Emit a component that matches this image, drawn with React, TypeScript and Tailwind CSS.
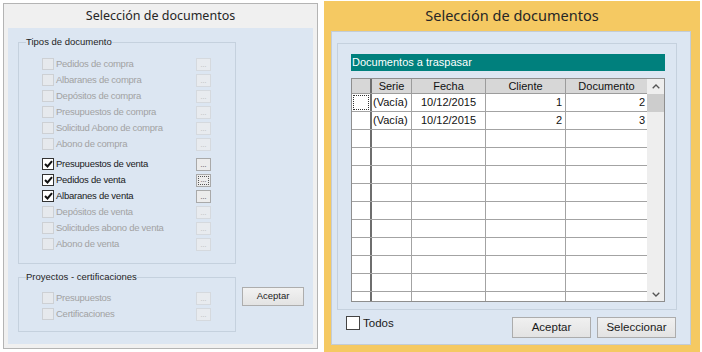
import React from 'react';

type Row = { label: string; enabled?: boolean; checked?: boolean; focus?: boolean; gap?: boolean };

const tipos: Row[] = [
  { label: 'Pedidos de compra' },
  { label: 'Albaranes de compra' },
  { label: 'Depósitos de compra' },
  { label: 'Presupuestos de compra' },
  { label: 'Solicitud Abono de compra' },
  { label: 'Abono de compra' },
  { label: 'Presupuestos de venta', enabled: true, checked: true, gap: true },
  { label: 'Pedidos de venta', enabled: true, checked: true, focus: true },
  { label: 'Albaranes de venta', enabled: true, checked: true },
  { label: 'Depósitos de venta' },
  { label: 'Solicitudes abono de venta' },
  { label: 'Abono de venta' },
];

const proyectos: Row[] = [{ label: 'Presupuestos' }, { label: 'Certificaciones' }];

const docs = [
  { serie: '(Vacía)', fecha: '10/12/2015', cliente: '1', documento: '2' },
  { serie: '(Vacía)', fecha: '10/12/2015', cliente: '2', documento: '3' },
];

function Check({ checked, enabled }: { checked?: boolean; enabled?: boolean }) {
  return (
    <span
      className={`w-[12px] h-[12px] border flex items-center justify-center shrink-0 ${
        enabled ? 'border-[#333333] bg-white' : 'border-[#cdd0d4] bg-[#e6e9ed]'
      }`}
    >
      {checked && (
        <svg width="9" height="8" viewBox="0 0 9 8">
          <path d="M1 4 L3.5 6.5 L8 1.2" fill="none" stroke="#111" strokeWidth="2" />
        </svg>
      )}
    </span>
  );
}

function DotsButton({ enabled, focus }: { enabled?: boolean; focus?: boolean }) {
  return (
    <span
      className={`ml-auto w-[15px] h-[13px] border flex items-end justify-center p-[1px] ${
        enabled ? 'border-[#a9a9a9] bg-[#ececec] text-[#333]' : 'border-[#d5d9de] bg-[#e8ebef] text-[#b4b4b4]'
      }`}
    >
      <span
        className={`w-full h-full flex items-end justify-center text-[7px] leading-[8px] ${
          focus ? 'border border-dotted border-[#555]' : ''
        }`}
      >
        ...
      </span>
    </span>
  );
}

function OptionRow({ row }: { row: Row }) {
  return (
    <div className={`w-[169px] h-[16px] flex items-center ${row.gap ? 'mt-[4px]' : ''}`}>
      <Check checked={row.checked} enabled={row.enabled} />
      <span className={`ml-[2px] text-[9.5px] tracking-[-0.25px] ${row.enabled ? 'text-[#1a1a1a]' : 'text-[#a2a2a2]'}`}>
        {row.label}
      </span>
      <DotsButton enabled={row.enabled} focus={row.focus} />
    </div>
  );
}

function LeftWindow() {
  return (
    <div className="ml-[3px] mt-[3px] w-[315px] h-[346px] bg-[#f0f0f0] border border-[#b4b4b4] flex flex-col">
      <div className="h-[24px] flex items-center justify-center text-[12.5px] text-[#262626] font-['Noto_Sans',sans-serif]">
        Selección de documentos
      </div>
      <div className="mx-[4px] mb-[4px] flex-1 bg-[#dce6f2] pl-[10px] pt-[8px]">
        <fieldset className="w-[218px] border border-[#c5d1de] pl-[23px] pt-[8px] pb-[11px]">
          <legend className="ml-[-16px] text-[9.5px] leading-[12px] text-[#1e1e1e]">Tipos de documento</legend>
          {tipos.map((r) => (
            <OptionRow key={r.label} row={r} />
          ))}
        </fieldset>
        <div className="flex items-start mt-[7px]">
          <fieldset className="w-[218px] border border-[#c5d1de] pl-[23px] pt-[7px] pb-[9px]">
            <legend className="ml-[-16px] text-[9.5px] leading-[12px] text-[#1e1e1e]">Proyectos - certificaciones</legend>
            {proyectos.map((r) => (
              <OptionRow key={r.label} row={r} />
            ))}
          </fieldset>
          <button className="ml-[6px] mt-[16px] w-[62px] h-[19px] border border-[#adadad] bg-gradient-to-b from-[#f2f2f2] to-[#e3e3e3] text-[9.5px] text-[#222]">
            Aceptar
          </button>
        </div>
      </div>
    </div>
  );
}

function Chevron({ down }: { down?: boolean }) {
  return (
    <svg width="8" height="5" viewBox="0 0 8 5" className={down ? 'rotate-180' : ''}>
      <path d="M0.7 4.3 L4 1 L7.3 4.3" fill="none" stroke="#555" strokeWidth="1.3" />
    </svg>
  );
}

function Grid() {
  const empty = Array.from({ length: 10 });
  return (
    <div className="mt-[7px] w-[314px] h-[224px] border border-[#8e8e8e] flex overflow-hidden bg-white text-[11px] text-[#111]">
      <div className="w-[295px] flex flex-col">
        <div className="h-[15px] shrink-0 flex bg-[#d7d7d7] border-b border-[#9c9c9c] leading-[14px]">
          <div className="w-[20px] border-r-2 border-[#6e6e6e]" />
          <div className="w-[40px] border-r border-[#9c9c9c] text-center">Serie</div>
          <div className="w-[74px] border-r border-[#9c9c9c] text-center">Fecha</div>
          <div className="w-[80px] border-r border-[#9c9c9c] text-center">Cliente</div>
          <div className="w-[81px] text-center">Documento</div>
        </div>
        {docs.map((d, i) => (
          <div key={i} className="h-[18px] shrink-0 flex border-b border-[#a3a3a3] leading-[17px]">
            <div className="w-[20px] border-r-2 border-[#6e6e6e] p-[1px]">
              {i === 0 && <div className="w-full h-full border border-dotted border-[#333]" />}
            </div>
            <div className="w-[40px] border-r border-[#a3a3a3] pl-[1px] whitespace-nowrap overflow-hidden">{d.serie}</div>
            <div className="w-[74px] border-r border-[#a3a3a3] text-center">{d.fecha}</div>
            <div className="w-[80px] border-r border-[#a3a3a3] text-right pr-[3px]">{d.cliente}</div>
            <div className="w-[81px] text-right pr-[2px]">{d.documento}</div>
          </div>
        ))}
        {empty.map((_, i) => (
          <div key={i} className="h-[18px] shrink-0 flex border-b border-[#a3a3a3]">
            <div className="w-[20px] border-r-2 border-[#6e6e6e]" />
            <div className="w-[40px] border-r border-[#a3a3a3]" />
            <div className="w-[74px] border-r border-[#a3a3a3]" />
            <div className="w-[80px] border-r border-[#a3a3a3]" />
            <div className="w-[81px]" />
          </div>
        ))}
      </div>
      <div className="w-[17px] flex flex-col bg-[#eeeeee]">
        <div className="h-[15px] flex items-center justify-center">
          <Chevron />
        </div>
        <div className="h-[18px] bg-[#cdcdcd]" />
        <div className="flex-1" />
        <div className="h-[14px] flex items-center justify-center">
          <Chevron down />
        </div>
      </div>
    </div>
  );
}

function RightWindow() {
  return (
    <div className="ml-[6px] mt-[1px] w-[376px] h-[351px] bg-[#f5c962] flex flex-col">
      <div className="h-[30px] flex items-center justify-center text-[14.5px] text-[#262626] font-['Noto_Sans',sans-serif]">
        Selección de documentos
      </div>
      <div className="ml-[7px] mr-[9px] mb-[7px] flex-1 bg-[#dce6f2] border border-[#c3ccd6] pl-[5px] pt-[11px] flex flex-col">
        <div className="w-[340px] h-[267px] border border-[#c5d1de] pl-[13px] pt-[10px]">
          <div className="w-[314px] h-[17px] bg-[#00807d] text-white text-[11px] leading-[17px] pl-[1px]">
            Documentos a traspasar
          </div>
          <Grid />
        </div>
        <div className="flex items-start pl-[9px] pr-[14px]">
          <span className="mt-[6px] w-[14px] h-[14px] border border-[#444] bg-white" />
          <span className="ml-[3px] mt-[6px] text-[11.5px] leading-[14px] text-[#1a1a1a]">Todos</span>
          <button className="ml-auto mt-[7px] w-[79px] h-[21px] border border-[#acacac] bg-gradient-to-b from-[#f0f0f0] to-[#e3e3e3] text-[11.5px] text-[#1a1a1a]">
            Aceptar
          </button>
          <button className="ml-[6px] mt-[7px] w-[79px] h-[21px] border border-[#acacac] bg-gradient-to-b from-[#f0f0f0] to-[#e3e3e3] text-[11.5px] text-[#1a1a1a]">
            Seleccionar
          </button>
        </div>
      </div>
    </div>
  );
}

export default function App() {
  return (
    <div className="w-[702px] h-[352px] bg-white flex items-start overflow-hidden font-['Liberation_Sans',Arial,sans-serif]">
      <LeftWindow />
      <RightWindow />
    </div>
  );
}
